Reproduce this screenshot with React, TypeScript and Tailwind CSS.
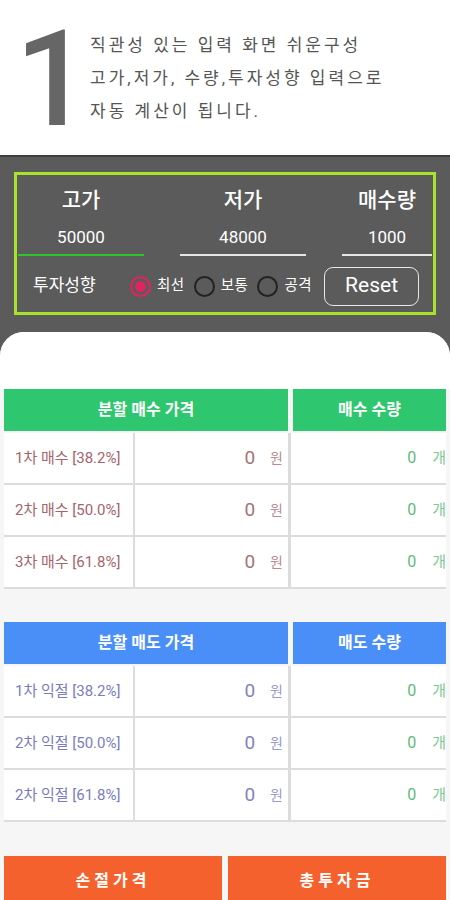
const font = "font-['Roboto','Noto_Sans_CJK_KR',sans-serif]"

const buyRows = ['1차 매수 [38.2%]', '2차 매수 [50.0%]', '3차 매수 [61.8%]']
const sellRows = ['1차 익절 [38.2%]', '2차 익절 [50.0%]', '2차 익절 [61.8%]']

function Radio({ checked, label }: { checked?: boolean; label: string }) {
  return (
    <div className="flex items-center gap-[6px]">
      <span
        className={`w-[21px] h-[21px] rounded-full border-2 flex items-center justify-center ${
          checked ? 'border-[#e0245e]' : 'border-[#222]'
        }`}
      >
        {checked && <span className="w-[11px] h-[11px] rounded-full bg-[#e0245e]" />}
      </span>
      <span className="text-[14.5px] tracking-[0.5px] text-white">{label}</span>
    </div>
  )
}

function Field({ label, value, width, active }: { label: string; value: string; width: string; active?: boolean }) {
  return (
    <div className={`flex flex-col items-center ${width}`}>
      <div className="h-[44px] pt-[8px] flex items-center text-[21px] text-white font-medium">{label}</div>
      <div className="h-[35px] pt-[2px] flex items-center text-[17px] text-white">{value}</div>
      <div className={`w-full ${active ? 'h-[2px] bg-[#2cc52c]' : 'h-[1.5px] bg-[#e6e6e6]'}`} />
    </div>
  )
}

function Table({
  header,
  qtyHeader,
  headBg,
  rows,
  labelColor,
  valueColor,
}: {
  header: string
  qtyHeader: string
  headBg: string
  rows: string[]
  labelColor: string
  valueColor: string
}) {
  return (
    <div className="flex flex-col px-[4px]">
      <div className="flex gap-[5px] h-[42px] mb-[2px] text-white text-[16px] font-bold">
        <div className={`w-[284px] flex items-center justify-center ${headBg}`}>{header}</div>
        <div className={`flex-1 flex items-center justify-center ${headBg}`}>{qtyHeader}</div>
      </div>
      {rows.map((r) => (
        <div key={r} className="flex h-[52px] border-b-2 border-[#dcdcdc] bg-white">
          <div className={`w-[131px] border-r-2 border-[#dcdcdc] flex items-center pl-[11px] text-[15px] ${labelColor}`}>
            {r}
          </div>
          <div className={`w-[156px] border-r-[3px] border-[#dcdcdc] flex items-center justify-end pr-[5px] ${valueColor}`}>
            <span className="text-[19px]">0</span>
            <span className="text-[14px] ml-[15px] opacity-80">원</span>
          </div>
          <div className="flex-1 flex items-center justify-end text-[#5cba7c]">
            <span className="text-[16px]">0</span>
            <span className="text-[15px] ml-[16px] opacity-80">개</span>
          </div>
        </div>
      ))}
    </div>
  )
}

export default function App() {
  return (
    <div className={`w-[450px] h-[900px] overflow-hidden bg-[#5b5b5b] ${font}`}>
      {/* intro */}
      <div className="h-[157px] bg-white flex border-b-2 border-[#3c3c3c]">
        <div className="pt-[13px] pl-[15px] w-[90px] text-[133px] leading-[133px] text-[#666] font-medium">1</div>
        <div className="pt-[29px] text-[17px] leading-[33px] text-[#555] tracking-[3px]">
          <div>직관성 있는 입력 화면 쉬운구성</div>
          <div>고가,저가, 수량,투자성향 입력으로</div>
          <div>자동 계산이 됩니다.</div>
        </div>
      </div>

      {/* input box */}
      <div className="px-[14px] pt-[15px]">
        <div className="h-[143px] border-[3px] border-[#a8e22c] px-[1px]">
          <div className="flex gap-[36px]">
            <Field label="고가" value="50000" width="w-[126px]" active />
            <Field label="저가" value="48000" width="w-[126px]" />
            <Field label="매수량" value="1000" width="w-[90px]" />
          </div>
          <div className="flex items-center mt-[10px] h-[40px]">
            <span className="text-[17px] text-white ml-[15px] w-[97px]">투자성향</span>
            <div className="flex items-center gap-[9px]">
              <Radio checked label="최선" />
              <Radio label="보통" />
              <Radio label="공격" />
            </div>
            <div className="ml-[12px] w-[95px] h-[39px] border-[1.5px] border-[#e8e8e8] rounded-[9px] flex items-center justify-center text-white text-[21px]">
              Reset
            </div>
          </div>
        </div>
      </div>

      {/* result card */}
      <div className="mt-[17px] bg-[#f6f6f6] rounded-t-[24px] overflow-hidden h-[600px]">
        <div className="h-[57px] bg-white" />
        <Table
          header="분할 매수 가격"
          qtyHeader="매수 수량"
          headBg="bg-[#2ec66e]"
          rows={buyRows}
          labelColor="text-[#a5646c]"
          valueColor="text-[#a57377]"
        />
        <div className="h-[33px]" />
        <Table
          header="분할 매도 가격"
          qtyHeader="매도 수량"
          headBg="bg-[#4a8ef8]"
          rows={sellRows}
          labelColor="text-[#7b7cbd]"
          valueColor="text-[#8183bd]"
        />
        <div className="h-[34px]" />
        <div className="flex gap-[6px] px-[4px]">
          <div className="w-[218px] h-[50px] bg-[#f4612c] flex items-center justify-center text-white text-[16px] font-bold tracking-[4px]">
            손절가격
          </div>
          <div className="flex-1 h-[50px] bg-[#f4612c] flex items-center justify-center text-white text-[16px] font-bold tracking-[4px]">
            총투자금
          </div>
        </div>
      </div>
    </div>
  )
}
